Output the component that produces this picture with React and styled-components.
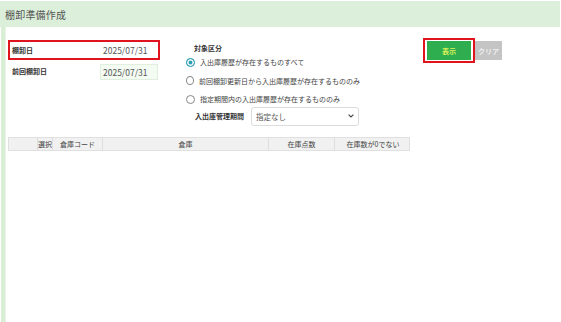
import React from "react";
import styled, { createGlobalStyle } from "styled-components";

const GlobalStyle = createGlobalStyle`
  html, body {
    margin: 0;
    padding: 0;
    background: #ffffff;
  }
  body {
    font-family: "Noto Sans CJK JP", "Noto Sans", sans-serif;
    color: #333;
  }
`;

const Page = styled.div`
  width: 561px;
  height: 322px;
  display: flex;
  flex-direction: column;
  overflow: hidden;
  background: #fff;
`;

const Header = styled.div`
  height: 26px;
  margin-top: 1px;
  margin-right: 1px;
  background: #dcefdb;
  display: flex;
  align-items: center;
  padding-left: 5px;
  font-size: 10px;
  color: #555;
  letter-spacing: 0.2px;
`;

const Body = styled.div`
  flex: 1;
  display: flex;
`;

const Strip = styled.div`
  width: 4px;
  margin-left: 1px;
  background: #d8efd6;
  border-right: 1px solid #e8f5e6;
`;

const Main = styled.div`
  flex: 1;
  padding: 11px 0 0 2px;
  display: flex;
  flex-direction: column;
`;

const TopRow = styled.div`
  display: flex;
  align-items: flex-start;
`;

const FormCol = styled.div`
  width: 152px;
  display: flex;
  flex-direction: column;
  gap: 1px;
  margin-top: 2px;
`;

const FieldRow = styled.div`
  height: 20px;
  display: flex;
  align-items: stretch;
  box-sizing: border-box;
  border: 2px solid ${({ highlight }) => (highlight ? "#e0141e" : "transparent")};
`;

const FieldLabel = styled.div`
  width: 88px;
  padding: 3px 0 0 2px;
  font-size: 7px;
  font-weight: bold;
  color: #333;
`;

const DateInput = styled.div`
  width: 58px;
  box-sizing: border-box;
  display: flex;
  align-items: center;
  padding-left: 2px;
  font-size: 8.5px;
  color: #555;
  background: ${({ muted }) => (muted ? "#f3fbf2" : "#ffffff")};
  border: 1px solid ${({ muted }) => (muted ? "#dfeedd" : "#ffffff")};
  margin: ${({ muted }) => (muted ? "1px 0 -1px 0" : "0")};
`;

const TargetCol = styled.div`
  width: 174px;
  margin-left: 26px;
  margin-top: 5px;
  display: flex;
  flex-direction: column;
`;

const SectionTitle = styled.div`
  font-size: 7px;
  font-weight: bold;
  color: #333;
  margin-left: 8px;
  height: 10px;
  line-height: 10px;
`;

const RadioRow = styled.div`
  display: flex;
  align-items: center;
  height: 18.5px;
  font-size: 7px;
  color: #444;
  gap: 5px;
  white-space: nowrap;
`;

const RadioDot = styled.span`
  width: 9px;
  height: 9px;
  box-sizing: border-box;
  border-radius: 50%;
  border: 1px solid ${({ checked }) => (checked ? "#2a9fb5" : "#888")};
  background: ${({ checked }) => (checked ? "#2a9fb5" : "#fff")};
  box-shadow: ${({ checked }) => (checked ? "inset 0 0 0 1.5px #fff" : "none")};
`;

const PeriodRow = styled.div`
  display: flex;
  align-items: center;
  margin-left: 9px;
  margin-top: -2px;
  gap: 7px;
`;

const PeriodLabel = styled.div`
  font-size: 7px;
  font-weight: bold;
  color: #333;
`;

const Select = styled.div`
  width: 108px;
  height: 19px;
  box-sizing: border-box;
  border: 1px solid #dcdcdc;
  border-radius: 3px;
  display: flex;
  align-items: center;
  justify-content: space-between;
  padding: 0 4px 0 4px;
  font-size: 7.5px;
  color: #555;
`;

const ButtonGroup = styled.div`
  margin-left: 63px;
  display: flex;
  align-items: center;
`;

const HighlightBox = styled.div`
  border: 2px solid #e0141e;
  padding: 1px 2px;
  display: flex;
`;

const Button = styled.div`
  height: 19px;
  display: flex;
  align-items: center;
  justify-content: center;
  font-size: 7px;
  font-weight: bold;
  width: ${({ w }) => w}px;
  background: ${({ primary }) => (primary ? "#2eae4f" : "#c4c4c4")};
  color: ${({ primary }) => (primary ? "#d8f05a" : "#eeeeee")};
`;

const Table = styled.div`
  margin-top: 11px;
  width: 402px;
  display: grid;
  grid-template-columns: 28px 15px 50px 166px 66px 77px;
  height: 14px;
  background: #f1f1f1;
  border: 1px solid #e0e0e0;
  box-sizing: border-box;
`;

const HeadCell = styled.div`
  display: flex;
  align-items: center;
  justify-content: center;
  font-size: 7px;
  color: #444;
  border-left: ${({ first }) => (first ? "none" : "1px solid #dedede")};
  white-space: nowrap;
  overflow: hidden;
`;

const Chevron = () => (
  <svg width="6" height="4" viewBox="0 0 6 4">
    <path d="M0.6 0.6 L3 3 L5.4 0.6" fill="none" stroke="#444" strokeWidth="1.1" />
  </svg>
);

const radios = [
  { label: "入出庫履歴が存在するものすべて", checked: true },
  { label: "前回棚卸更新日から入出庫履歴が存在するもののみ", checked: false },
  { label: "指定期間内の入出庫履歴が存在するもののみ", checked: false },
];

const columns = [
  { key: "blank", label: "" },
  { key: "sel", label: "選択" },
  { key: "code", label: "倉庫コード" },
  { key: "name", label: "倉庫" },
  { key: "count", label: "在庫点数" },
  { key: "nonzero", label: "在庫数が0でない" },
];

const App = () => (
  <>
    <GlobalStyle />
    <Page>
      <Header>棚卸準備作成</Header>
      <Body>
        <Strip />
        <Main>
          <TopRow>
            <FormCol>
              <FieldRow highlight>
                <FieldLabel>棚卸日</FieldLabel>
                <DateInput>2025/07/31</DateInput>
              </FieldRow>
              <FieldRow>
                <FieldLabel>前回棚卸日</FieldLabel>
                <DateInput muted>2025/07/31</DateInput>
              </FieldRow>
            </FormCol>
            <TargetCol>
              <SectionTitle>対象区分</SectionTitle>
              {radios.map((r) => (
                <RadioRow key={r.label}>
                  <RadioDot checked={r.checked} />
                  {r.label}
                </RadioRow>
              ))}
              <PeriodRow>
                <PeriodLabel>入出庫管理期間</PeriodLabel>
                <Select>
                  指定なし
                  <Chevron />
                </Select>
              </PeriodRow>
            </TargetCol>
            <ButtonGroup>
              <HighlightBox>
                <Button primary w={44}>
                  表示
                </Button>
              </HighlightBox>
              <Button w={27}>クリア</Button>
            </ButtonGroup>
          </TopRow>
          <Table>
            {columns.map((c, i) => (
              <HeadCell key={c.key} first={i === 0}>
                {c.label}
              </HeadCell>
            ))}
          </Table>
        </Main>
      </Body>
    </Page>
  </>
);

export default App;
